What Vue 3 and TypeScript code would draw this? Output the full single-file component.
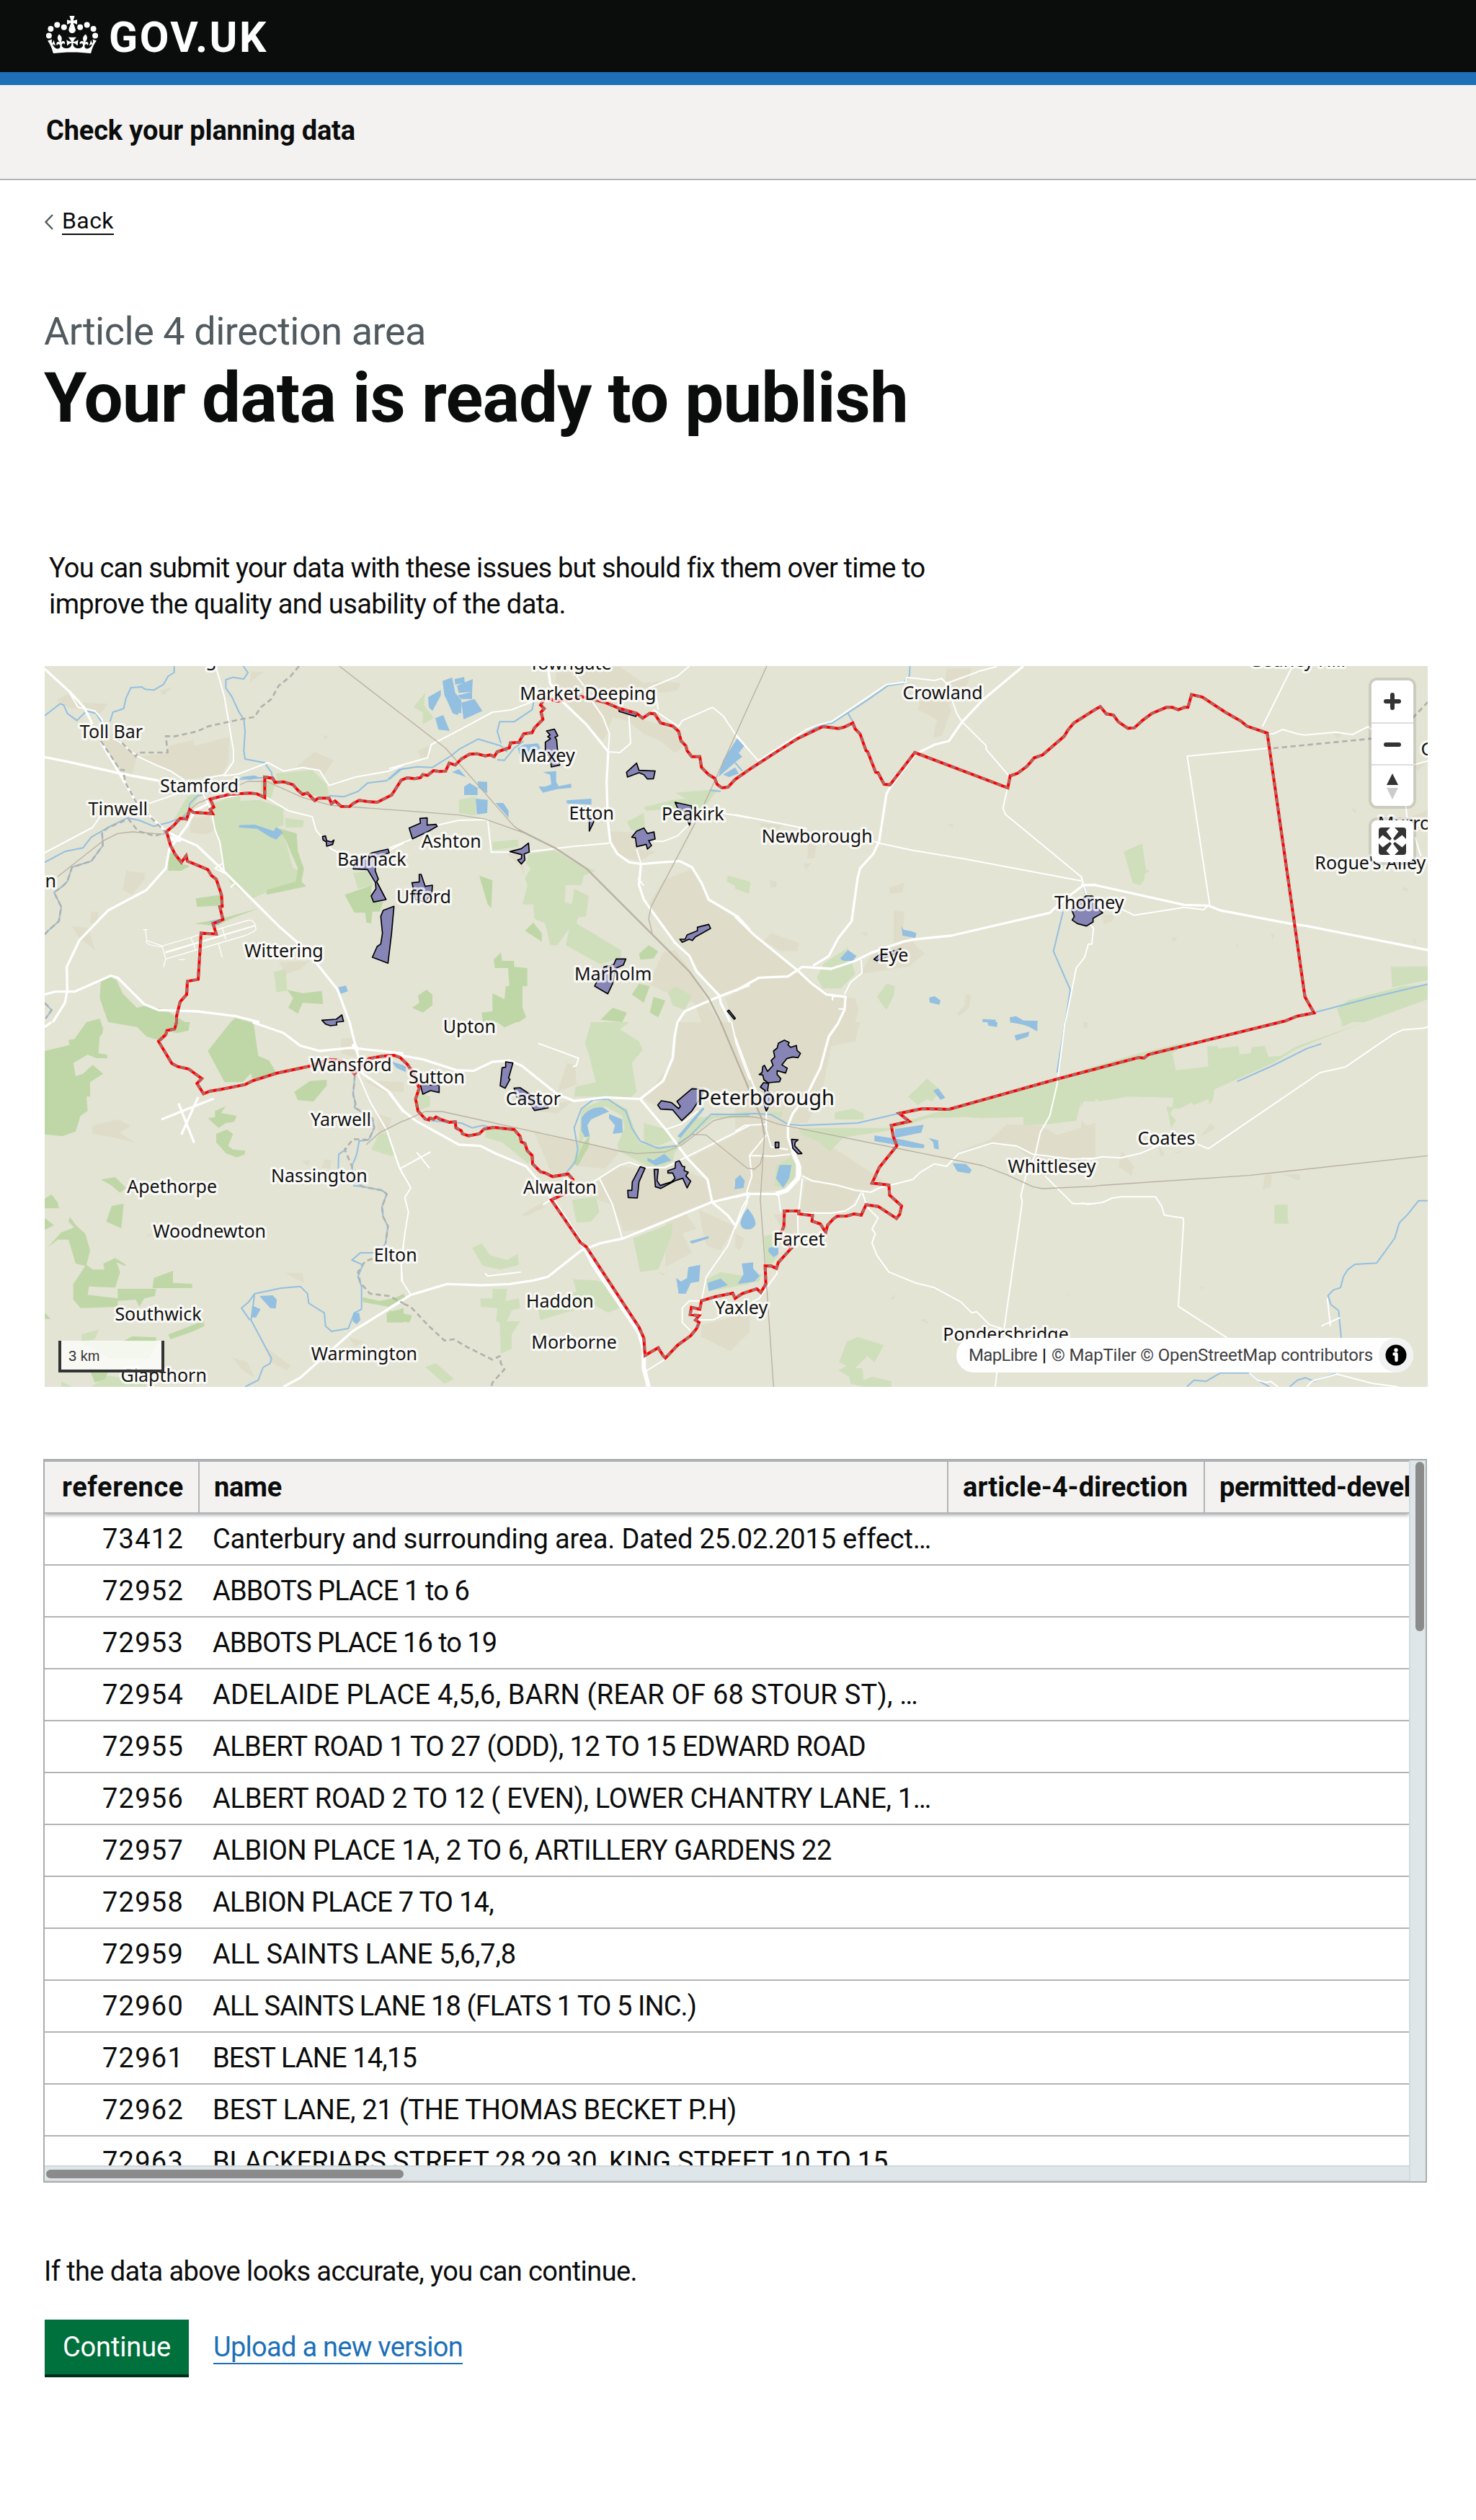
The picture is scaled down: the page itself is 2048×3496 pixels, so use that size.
<script setup lang="ts">
type Piece = [number, number, string]
interface Layer { name: string; pieces: Piece[] }
interface Place { text: string; col: number; row: number; x: number; y: number; w: number; big?: boolean }

// Spreads letters so that a run of text takes exactly the given width.
const vFit = {
  mounted(el: HTMLElement, binding: { value: number }) {
    const natural = el.getBoundingClientRect().width
    const count = (el.textContent ?? '').trim().length
    el.style.letterSpacing = `${(binding.value - natural) / count}px`
  },
}

// The map is drawn in sheets, 1440 x 1500 units apart.
const sheet = (col: number, row: number) => `translate(${col * 1440} ${row * 1500})`

const layers: Layer[] = [
  { name: 'urban', pieces: [
    [0, 0, 'M390 395L510 380 520 350 625 325 630 350 775 312 770 420 745 470 680 480 590 490 530 455 430 415ZM270 290L300 320 390 395 370 470 290 440 245 340ZM615 650L690 640 715 700 680 720 610 710ZM980 1250L1110 1245 1070 1280 1010 1300ZM345 870L425 880 420 910 370 970 330 950ZM120 1100L190 1110 215 1200 150 1150ZM1050 440L1130 375 1210 410 1170 470 1100 440ZM55 160L110 130 160 170 270 175 240 215 100 190ZM865 40L920 42 860 85ZM485 120L540 105 500 140ZM1165 305L1185 310 1175 325ZM200 1040L230 1040 225 1090 195 1090Z'],
    [1, 0, 'M700 20L960 20 1060 90 1130 80 1215 90 1200 120 1130 130 1080 110 930 180 1000 220 1120 260 1200 290 1230 350 1190 380 1130 330 1060 300 1000 250 930 230 910 290 890 330 760 200 690 90ZM920 705L1010 710 1030 780 1110 790 1040 830 960 810 930 760ZM1140 910L1260 862 1330 990 1500 1110 1500 1340 1370 1390 1250 1240 1110 1060 1080 1010ZM1140 1210L1190 1200 1250 1280 1370 1500 1300 1500 1270 1420 1140 1370 1080 1340ZM1400 1400L1500 1350 1500 1500 1430 1500ZM490 800L555 800 560 890 545 850ZM120 370L165 350 170 400 130 400Z'],
    [2, 0, 'M0 1060L100 1150 260 1280 400 1390 500 1400 515 1450 500 1500 0 1500ZM880 30L985 25 970 90 890 180 900 200 860 310 825 315 840 240 760 200 770 165 870 120ZM660 1035L705 1040 700 1110 760 1190 790 1215 720 1270 520 1300 560 1230 660 1170ZM305 745L340 740 330 820 300 820ZM640 940L705 920 695 960 645 965ZM150 1130L265 1170 260 1205 190 1205 120 1160ZM100 670L200 680 170 705 110 690ZM145 910L175 915 170 938 148 938ZM285 840L318 838 295 866ZM880 678L908 676 905 690ZM525 1128L555 1126 545 1142ZM960 1385L980 1385 975 1440 935 1475 925 1465 955 1430Z'],
    [3, 0, 'M90 1055L140 1050 130 1080 95 1095ZM1050 300L1085 300 1070 318ZM1125 610L1148 618 1140 630ZM1340 937L1360 945 1358 955 1338 950ZM380 1148L400 1148 395 1163 378 1160ZM640 1175L656 1180 652 1192ZM790 1133L805 1133 798 1158ZM1380 1152L1394 1155 1390 1178ZM1360 650L1443 618 1443 680 1370 680ZM750 300L780 310 790 350 770 330ZM1385 420L1443 412 1400 455Z'],
    [0, 1, 'M205 430L310 405 365 430 320 460 380 500 290 480 205 465ZM1240 70L1290 65 1310 150 1240 130ZM1330 240L1500 250 1500 290 1420 290ZM1390 380L1450 400 1430 470 1390 450ZM1005 1045L1080 1045 1085 1085ZM935 1360L1030 1430 1015 1450 940 1410ZM785 1395L850 1415 880 1480 830 1450ZM1075 580L1110 572 1105 600ZM1170 570L1200 575 1195 610 1160 605ZM430 885L460 880 435 895ZM1270 1310L1330 1330 1300 1350Z'],
    [1, 1, 'M1200 0L1500 0 1500 300 1310 280 1150 370 1060 320 1190 150ZM740 170L775 180 780 260 700 290ZM1240 570L1500 440 1500 700 1345 745 1320 650ZM880 650L960 600 1060 610 1180 600 1325 655 1340 750 1080 860 975 870 930 760ZM600 450L780 500 960 540 900 610 790 600 770 570 730 640 680 640ZM1150 800L1230 790 1280 860 1220 880 1260 960 1150 1020ZM1290 780L1440 850 1380 950 1320 930 1300 850ZM1300 1260L1500 1210 1500 1290 1420 1370 1300 1310ZM790 690L880 660 930 760 870 740ZM550 800L640 750 650 770 570 808ZM650 340L760 330 700 380 600 370ZM1120 1040L1150 1045 1140 1056Z'],
    [2, 1, 'M0 0L520 0 500 80 400 100 360 300 300 420 0 420ZM130 380L420 530 620 660 560 700 480 690 300 650 270 620 200 700 0 710 0 400ZM290 660L530 700 460 790 270 790ZM920 540L1060 490 1130 425 1270 430 1340 470 1500 420 1500 560 1360 620 1290 650 1240 580 1160 510 1060 510ZM160 800L260 800 260 900 200 870ZM0 1230L60 1240 0 1310ZM0 880L40 900 20 950 0 940ZM770 1240L790 1235 810 1260ZM640 1150L670 1135 660 1155ZM1370 1140L1395 1125 1390 1135Z'],
    [3, 1, 'M0 410L35 440 0 475ZM170 535L220 600 210 640 155 600ZM320 510L350 550 330 560ZM765 635L795 635 790 685 755 700ZM500 470L540 420 560 440 510 470ZM835 633L912 633 910 660 895 655ZM385 545L430 530 405 545ZM490 1100L512 1105 505 1112ZM10 0L28 0 25 25 12 22Z'],
  ] },
  { name: 'grass', pieces: [
    [0, 0, 'M820 580L900 575 1000 610 1000 680 970 690 1010 750 1040 860 1075 870 1050 915 930 960 865 988 780 920 755 880 735 740 705 680 710 590 760 570 820 555ZM905 490L970 500 945 575 905 560ZM970 465L1120 450 1180 510 1190 560 1090 555 1050 510 970 490ZM1005 650L1085 660 1080 690 1010 690ZM600 560L660 540 600 640 560 670 545 655ZM1290 880L1350 870 1375 930 1310 945ZM960 1290L1010 1280 1015 1370 970 1375Z'],
    [1, 0, 'M150 130L145 180 185 235 140 260 140 210 100 190ZM290 575L360 560 360 640 290 630ZM430 750L535 740 540 770 430 785ZM580 800L690 785 800 850 860 870 810 890 800 930 735 930 730 1000 760 1010 770 945 830 975 820 1060 785 1065 780 1090 965 1200 965 1230 880 1260 735 1180 750 1110 700 1180 670 1180 650 1090 605 1070 600 1010 555 1010 575 930 565 900 590 860 570 840ZM990 665L1060 630 1065 690 1030 705 1005 700ZM1190 545L1370 530 1300 620 1240 610 1070 620 1060 605 1180 575 1235 570ZM1410 890L1500 915 1500 960 1405 915ZM1160 1375L1190 1350 1260 1390 1230 1450 1180 1430Z'],
    [2, 0, 'M0 905L65 920 55 965 0 945ZM340 1315L370 1255 470 1190 500 1300 440 1360 365 1360ZM630 1340L665 1350 660 1390 630 1450 590 1395Z'],
    [3, 0, 'M178 790L255 757 270 865 285 870 265 885 263 910 245 930 215 920ZM1290 1270L1443 1268 1443 1325 1295 1355ZM1110 1410L1340 1350 1443 1345 1443 1405 1180 1500 1085 1500 1065 1445Z'],
    [0, 1, 'M160 1300L230 1280 215 1320 160 1330ZM1400 460L1440 470 1465 555 1420 550 1365 530ZM75 1495L120 1518 75 1518ZM270 1470L430 1500 430 1518 200 1518ZM150 1330L480 1330 440 1400 280 1400Z'],
    [1, 1, 'M840 0L1000 0 960 30 1040 80 1055 115 1010 170 1030 290 1000 320 900 310 770 310 775 270 860 250 830 130 815 90ZM800 360L900 320 990 360 1040 500 1100 520 1190 510 1270 400 1500 370 1500 400 1350 400 1250 480 1190 540 1180 580 1140 600 1080 600 960 540 950 510 980 440 970 390 900 350 830 370 810 480 770 600 750 620 790 500ZM1060 420L1150 445 1180 490 1120 515 1060 500ZM120 290L170 310 170 350 120 370ZM400 440L520 450 550 500 590 560 580 590 530 550 470 500 400 480ZM760 740L860 725 875 790 840 830 780 835ZM1015 900L1180 835 1175 890 1120 1030 1045 1040ZM345 940L385 920 420 970 490 990 535 965 540 1010 465 1030 390 1015ZM765 1070L860 1075 910 1090 960 1190 910 1210 850 1175 630 1240 620 1200 780 1120ZM380 1150L430 1150 430 1110 490 1110 485 1160 540 1150 545 1190 510 1200 490 1245 545 1245 510 1300 510 1360 465 1380 460 1250 445 1245 450 1190 380 1185ZM150 1435L195 1420 270 1485 230 1505ZM0 500L20 550 0 560ZM1320 1070L1380 1040 1500 1060 1500 1090 1330 1120Z'],
    [2, 1, 'M260 440L640 440 660 430 720 410 890 360 1330 235 1500 195 1500 330 1440 330 1420 410 1300 425 1200 430 1200 395 1030 400 960 395 800 400 650 450 450 480 395 540 350 500 280 470ZM720 310L800 235 855 285 820 330 800 320 760 345ZM120 370L200 375 190 400ZM415 375L490 360 535 380 535 405 415 405ZM170 600L230 560 260 600 240 660 200 690 165 680ZM120 890L180 880 180 970 150 1010 130 1010ZM0 1060L80 1050 110 1050 100 1080 0 1090ZM465 1330L510 1310 620 1345 580 1415 550 1390 500 1440 530 1440 535 1490 570 1475 650 1495 650 1518 540 1518 480 1505 475 1475 430 1450 465 1430 433 1415Z'],
    [3, 1, 'M0 200L240 130 450 80 380 130 395 200 530 185 525 100 570 100 570 110 655 100 660 135 705 130 710 105 765 98 780 145 830 140 900 100 1180 0 900 110 800 170 555 280 550 320 535 345 530 320 470 345 460 335 410 360 385 360 370 380 395 410 375 440 365 390 355 350 380 355 385 315 200 310 75 330 50 310 15 315 0 360ZM805 760L860 760 860 820 865 840 805 838ZM1085 0L1130 0 1085 20Z'],
  ] },
  { name: 'wood', pieces: [
    [0, 0, 'M970 690L1055 715 1060 790 1085 860 1075 915 1095 935 930 970 930 950 1050 915 1060 860 1010 745ZM520 790L545 800 570 840 610 850 575 870 520 870ZM635 985L740 970 745 1015 640 1020ZM630 1090L740 1070 900 1025 780 1070 720 1100ZM1255 970L1370 930 1365 960 1380 1000 1415 1000 1400 1040 1370 1040 1365 1090 1345 1085 1340 1045 1295 1045ZM1015 1365L1080 1380 1160 1370 1165 1425 1080 1420 1060 1465 1020 1440 1040 1400ZM240 1330L280 1310 305 1325 330 1380 390 1440 430 1430 510 1450 590 1500 270 1500 235 1400ZM180 1500L235 1485 240 1500ZM780 1500L800 1483 860 1500Z'],
    [1, 0, 'M375 890L430 910 425 1025 410 1010ZM600 1085L635 1130 635 1165 565 1120ZM465 1210L470 1245 520 1245 520 1270 575 1275 575 1350 555 1350 555 1440 570 1480 540 1500 390 1500 385 1460 430 1455 430 1380 480 1405 485 1350 500 1350 495 1275 440 1275 435 1240ZM120 1390L155 1365 180 1385 180 1430 140 1460 95 1440 125 1420ZM1040 1215L1080 1180 1120 1205 1100 1235 1045 1240ZM1040 1340L1085 1350 1060 1420 1010 1385ZM1100 1395L1150 1410 1120 1480 1085 1460ZM880 1490L930 1440 990 1460 970 1500Z'],
    [0, 1, 'M180 0L240 0 250 30 245 50 235 60 230 130 265 135 268 150 220 150 185 135 125 170 135 225 165 215 205 178 250 215 195 250 195 310 180 310 185 370 155 390 135 455 80 475 6 467 6 120 110 95 105 75 130 70ZM270 0L610 0 605 35 560 45 520 40 480 75 430 60 390 20ZM780 0L875 0 895 140 940 160 970 210 870 240 865 212 830 250 755 250 685 120ZM1045 290L1110 245 1180 240 1180 265 1125 330 1060 325ZM715 370L760 350 740 378 805 390 795 415 760 420 730 440 685 400 715 395ZM720 465L765 447 790 465 770 515 790 530 840 535 840 550 805 563 760 545 720 500ZM240 655L300 645 345 690 320 710 285 680ZM6 735L35 717 60 750 65 775 6 775ZM285 765L335 755 325 858 262 830ZM6 815L45 845 6 865ZM18 938L75 875 128 855 105 830 110 810 140 850 175 880 195 950 180 1010 205 1030 255 1030 250 1005 300 982 345 1010 340 1015 305 1000 320 1040 300 1105 190 1100 185 1135 310 1150 310 1110 470 1110 465 1140 420 1150 400 1185 385 1155 310 1160 310 1185 155 1190 125 1155 125 1090 175 1015 135 1005 105 905 60 905ZM540 1035L540 1085 620 1090 620 1107 455 1107 460 1065ZM520 1300L600 1270 670 1240 670 1265 630 1285 530 1320ZM330 1330L370 1308 470 1312 470 1330ZM6 1210L32 1235 6 1235ZM190 1440L270 1450 260 1485 215 1500ZM1330 1145L1400 1160 1500 1140 1500 1150 1440 1185 1330 1165ZM1430 1210L1500 1190 1500 1250 1430 1250Z'],
    [1, 1, 'M450 0L530 0 480 22ZM0 1160L60 1130 70 1150 0 1190ZM0 1200L95 1220 85 1250 0 1240ZM810 500L835 470 830 520 785 600 770 590Z'],
  ] },
  { name: 'water', pieces: [
    [0, 0, 'M820 480L880 473 900 482 860 492ZM815 680L880 678 960 705 970 688 998 710 970 740 945 730 890 695 815 690ZM695 1080L760 1065 730 1095 700 1090ZM1228 1355L1260 1348 1268 1372 1238 1382Z'],
    [1, 0, 'M222 80L262 65 275 130 300 160 300 215 290 212 285 222 265 215 240 160 230 140ZM272 72L312 64 315 88 275 95ZM282 100L348 72 345 125 290 130ZM285 140L345 125 345 155 300 155ZM300 170L355 155 388 205 310 240ZM162 148L215 118 215 140 180 205 165 190ZM192 235L225 222 252 288 205 283ZM262 460L290 447 320 480ZM290 555L312 555 312 520 335 505 368 525 368 555ZM368 498L408 500 408 548 372 525ZM360 570L410 575 408 630 365 635ZM443 588L475 588 497 620 497 650ZM640 460L695 455 695 500 705 518 758 508 758 525 700 530 640 545 622 520 650 520 675 510 670 470ZM738 577L842 570 842 595 740 590ZM1450 317L1478 350 1455 380 1470 395 1445 415 1370 480 1390 410ZM1390 470L1440 440 1455 465 1415 480ZM535 360L560 345 620 340 630 360 550 410Z'],
    [2, 0, 'M437 1235L470 1200 505 1225 490 1245 450 1245ZM692 1100L700 1115 735 1122 755 1130 750 1150 697 1140ZM808 1398L830 1392 855 1410 850 1428 810 1418ZM1030 1487L1085 1490 1085 1500 1030 1500ZM1143 1480L1170 1475 1200 1493 1260 1495 1260 1500 1145 1500Z'],
    [0, 1, 'M1450 165L1500 180 1500 200 1470 190ZM900 1140L955 1137 972 1155 968 1192 945 1190ZM870 1180L905 1195 885 1230 868 1228ZM1290 1210L1315 1210 1320 1240 1305 1258 1288 1245Z'],
    [1, 1, 'M800 400Q830 350 890 355L915 372 885 385 840 405 825 430 835 475 815 480 800 450ZM915 382L970 405 972 460 930 465 940 430 915 400ZM1075 565L1100 575 1145 548 1175 575 1110 597 1075 578ZM1200 475L1305 355 1312 362 1212 482ZM1435 695L1460 638 1480 660 1465 690ZM1250 912L1330 890 1330 900 1260 922ZM1195 1065L1215 1080 1240 1065 1245 1020 1295 1010 1290 1080 1255 1085 1235 1130 1205 1130ZM1325 1085L1380 1067 1410 1095 1330 1120ZM15 165L70 185 68 208 30 190Z'],
    [2, 1, 'M1050 0L1092 0 1090 20 1055 15ZM1140 0L1258 0 1258 38 1225 20 1195 10ZM1163 55L1225 40 1220 60 1170 77ZM825 285L845 275 875 315 855 323ZM665 445L785 427 775 460 665 482ZM580 472L700 490 788 510 785 525 735 522 580 495ZM805 482L845 492 848 530 828 525 825 500ZM905 587L960 590 985 615 975 630 925 622ZM185 595L235 595 225 650 200 690 170 650ZM52 775Q90 820 84 845 70 865 52 862 25 865 22 835 30 800 52 775ZM140 940L180 930 180 965 160 978 138 955ZM28 1005L75 1000 75 1025 102 1055 80 1080 10 1090 35 1050ZM0 655L20 635 40 660 35 690 0 695Z'],
  ] },
  { name: 'river', pieces: [
    [0, 0, 'M545 18L545 45 520 60 500 95 460 118 425 115 410 105 365 108 345 150 335 195 290 210 278 250M6 225L70 175 85 180 100 215 140 245 180 205 220 215 245 255M832 18L852 45 835 72 790 65 760 75 760 110 785 145 815 210 835 240 840 290 835 370 840 405 920 420 950 460 955 490M920 482L820 488 790 515 640 560 610 590 600 640 520 670 460 685 400 660 350 650 270 690 200 730 165 775 90 790 6 835M1190 557L1250 562 1310 540 1350 505 1430 495 1480 450 1500 445M245 710L248 765 200 830 120 855 100 915 80 935 45 960 75 1020 65 1080 20 1120 6 1135M6 1420L35 1450 10 1485'],
    [1, 0, 'M0 490L50 448 115 437 180 440 260 390 290 365 370 322 465 350 490 375M465 340L450 290 460 250 520 250 595 200 602 165M560 330L520 360 480 410 450 408M1335 535L1380 540M1440 420L1470 455'],
    [2, 0, 'M728 18L725 60 700 90 635 100 550 160 405 255 350 265 170 375M470 215L490 250M1445 920L1460 970M1365 1040L1325 1205 1395 1365 1375 1500'],
    [3, 0, 'M970 1460L1200 1400 1443 1342'],
    [0, 1, 'M1297 220L1290 300 1300 340 1295 355 1370 400 1378 440 1355 490 1315 495 1305 550 1285 600 1290 660 1330 685 1410 700 1430 715 1410 770 1415 810 1435 850 1425 920 1400 960 1320 960 1285 990 1330 1010 1310 1060 1325 1100 1325 1195 1295 1210 1270 1275 1200 1287 1175 1265 1170 1210 1105 1170 1100 1130 1070 1100 990 1107 880 1130 865 1240 950 1400 945 1420 915 1437 895 1490 840 1518M880 1130L855 1165 825 1190 860 1240M1228 610L1230 550 1265 525M1290 680L1330 685'],
    [1, 1, 'M175 410L300 420 345 440 390 430 430 440M735 630L775 580 785 530 770 440 800 360 850 323 910 320 985 370 1010 440 1045 495 1120 525 1190 515 1250 475 1340 383 1500 385'],
    [2, 1, 'M0 385L80 380 150 385 220 425 280 430 510 420 680 380M1373 0L1340 210'],
    [3, 1, 'M650 247L800 180 940 110 1000 90M1443 743L1405 743 1360 800 1325 835 1305 900 1230 1003 1140 1008 1110 1030 1092 1060 1080 1105 1050 1115 1028 1138 1040 1175 1072 1200 1083 1315M440 1518L470 1490 520 1495 580 1460 700 1460 735 1490 785 1518M868 1518L900 1490 935 1480 970 1495 1060 1462'],
  ] },
  { name: 'minor', pieces: [
    [0, 0, 'M110 130L145 190 215 205 245 240 250 270M718 18L755 150 770 240 792 370 792 415 755 470 700 480M300 320L395 395 470 430 530 455 590 495M750 475L810 468 870 445 935 420 1000 455 1080 440 1150 452 1190 515 1300 480 1440 455 1500 430M6 795L205 690 240 640M440 590L600 535M660 540L700 620 715 700 735 750 755 880 715 860 745 840M700 575L870 545 930 565 1020 620 1120 645 1135 700 1200 780 1240 800M1430 790L1500 755M780 940L800 920'],
    [1, 0, 'M0 445L160 400 175 345 300 280 430 210 510 200 600 165M780 60L810 100M845 165L890 230 917 300 912 375 960 378 1005 340 998 225M1080 110L1200 60 1250 18M1100 200L1205 270 1220 245 1345 190 1390 225 1440 300 1500 370M1110 140L1120 200M0 775L90 740 100 735M200 680L290 660 410 657 425 793 500 793M590 790L750 770 915 755M1100 748L1140 748 1200 725 1245 680M1390 630L1500 650M1030 780L1048 840M1035 900L1060 932'],
    [2, 0, 'M97 412L0 305M97 412L300 280 350 262 400 250 630 95 710 85 715 65 830 78 860 70 880 90 990 50 1020 38 1090 20M880 90L910 180 925 220 945 250 1045 350 1045 365 1140 475 1135 520 1115 610 1125 635 1210 705 1440 895 1450 930 1462 970M0 637L300 695M570 745L600 755 740 785 950 820 1440 912M1475 1090L1492 1110 1485 1175 1470 1175 1455 1230 1420 1275 1375 1500M525 1240L528 1295 480 1335 455 1385M405 1410L405 1395 440 1390M430 1445L455 1445'],
    [3, 0, 'M880 18L755 270M775 300L800 300 840 282 900 300 930 305 1060 293 1130 303 1195 270 1230 300M780 360L442 393 535 1010 510 1032 430 1022 220 1055 170 1030M1352 600L1357 650M1390 730L1415 810M1380 430L1443 413M0 890L10 928'],
    [0, 1, 'M1310 215L1360 330 1430 450 1480 600 1500 640M1500 930L1490 1000 1492 1080'],
    [1, 1, 'M1155 445L1215 425 1285 370M850 665L960 595 1000 583 1060 605 1150 605 1240 560 1400 480 1500 430M875 650L930 760 970 900M0 480L45 610 90 690 65 730 80 790 65 880 50 1000 55 1080 90 1135M45 610L172 540M115 542L168 608M620 88L788 150 780 180 765 186M400 1045L410 1057 548 1040M1500 720L1470 770 1440 850 1410 930 1320 1060 1300 1160 1290 1240 1350 1238 1400 1215M1300 1160L1250 1160 1220 1190 1220 1250 1255 1285M1065 1455L1145 1405M1425 0L1445 90 1500 240M640 760L680 735'],
    [2, 1, 'M0 60L30 140 75 260 130 370 130 450 150 520 220 530M0 455L40 430 130 425M60 555L130 470M60 555L160 558 230 550M60 555L70 640 50 700 50 750 0 860M280 640L320 660 420 677 500 700 565 708 600 690 740 655 770 625 830 590 880 600 930 548 1070 503 1170 515 1240 550 1300 557 1400 570 1500 567M525 710L500 760 460 785 400 795 270 795M530 710L550 770 595 815 570 860 583 880 570 920 590 970 640 1040 750 1085 830 1105 940 1165 985 1210 1005 1205 1060 1260 1110 1275M1373 0L1340 260 1310 390 1270 460 1250 550 1210 640 1190 720 1195 750 1120 1275M1290 640L1350 700 1405 755 1500 755M265 780L280 650M260 800L262 880M175 1020L175 1045 100 1150 70 1165M180 715L190 790M1090 1455L1083 1518'],
    [3, 1, 'M0 567L40 570 90 560 165 565 250 545 330 510M485 508L530 527 995 210 1100 187 1300 50 1340 32 1430 25 1443 18M0 753L30 758 90 750 130 732 170 727 310 727 335 765 347 803 425 815 427 830 405 1183 610 1315M1025 1148L1038 1265M1000 1265L1078 1230M700 1460L735 1490 770 1500 790 1495 820 1518M940 1518L960 1495 1065 1465 1210 1503 1320 1518'],
  ] },
  { name: 'major', pieces: [
    [0, 0, 'M6 30L110 125 170 190 205 260M240 335L320 470 390 590 510 705 570 735 640 765 740 860 900 1020 980 1100 1060 1170 1130 1245 1225 1365 1275 1500M6 397L120 420 320 465 480 495M6 1385L50 1373 130 1373 280 1307 310 1315 420 1425 480 1450 640 1455 800 1475 900 1500M40 1500L90 1420 100 1370 98 1270 150 1160 270 1035 430 950 510 860 525 780 560 735 600 680 630 620 690 590'],
    [1, 0, 'M660 18L670 90 720 165 820 260 912 375 905 500 910 660 920 750 950 800 1000 835 1050 842 1130 835 1210 830 1260 855 1300 920 1330 990 1450 1060 1500 1115M1048 842L1040 930 1060 990 1110 1060 1190 1170 1250 1225 1280 1290 1375 1390 1380 1420 1420 1500M1200 1500L1230 1455 1375 1393 1500 1345'],
    [2, 0, 'M1200 18L1030 160 945 250 890 330 830 345 750 385 650 515 630 550 600 745 575 800 520 860 510 900 485 1080 430 1150 390 1225 325 1265M0 1060L80 1138 260 1285 320 1340 380 1385 460 1395 455 1450 430 1500M0 1370L100 1315 220 1310 280 1270 400 1278 500 1245 570 1210 700 1165 750 1155 900 1140 1310 1045 1370 990 1450 930 1500 928'],
    [3, 0, 'M0 928L60 930 430 1012 530 1015 580 1035 870 1090 940 1100 1443 1200'],
    [0, 1, 'M6 20L35 0M870 0L1000 45 1070 98 1150 120 1280 107 1500 130M1275 0L1300 100 1330 215 1440 290 1500 375M1000 1518L1070 1480 1290 1285 1500 1155M492 405L710 318M645 312L575 468M563 338L628 502'],
    [1, 1, 'M0 130L140 155 280 200 350 203 430 165 500 160 550 180 700 300 770 328 900 313 1045 320 1140 245 1180 150 1188 60 1200 0M1045 320L1150 445 1240 565 1325 655 1345 750 1410 805 1440 845M0 295L60 370 110 410 290 510 380 515 440 545 570 600 620 660 680 740 820 950 850 1010 1040 1290 1060 1360 1060 1440 1080 1518M0 1190L90 1135 240 1090 390 1095 500 1090 600 1075 660 1060 800 950 880 920 975 900 1170 820 1340 750 1500 712'],
    [2, 1, 'M432 0L390 60 355 190 300 300 240 380 220 430 220 480 240 540 270 600 270 640 230 690 180 715 50 715 0 728'],
  ] },
  { name: 'trunk', pieces: [
    [1, 1, 'M680 740L820 950 850 1010 1040 1290 1060 1360 1060 1440 1080 1518'],
    [2, 1, 'M240 540L262 590 262 650 215 700 170 715'],
    [0, 0, 'M525 735L575 742M1290 1590L1310 1620'],
  ] },
  { name: 'runway', pieces: [
    [0, 0, 'M495 1183L850 1077Q880 1070 885 1110 890 1120 840 1140L510 1237 495 1183 430 1160M510 1237L500 1272M730 1175L745 1230M415 1115L435 1115M425 1115L430 1155M430 1160Q420 1180 495 1187M565 1240L590 1240M615 1150L635 1200M745 1110L760 1155M508 1212L880 1100M508 1208L880 1098'],
  ] },
  { name: 'rail', pieces: [
    [0, 0, 'M1232 18L1500 225M60 895L250 745 310 715 370 708 500 718 520 700 640 590 700 565M790 525L850 498 930 498 1080 565 1200 598 1500 620'],
    [1, 0, 'M60 225L235 360 520 685 560 712M60 620L290 638 400 655 560 712M1500 175L1290 640 1090 1020 1080 1070 1095 1130'],
    [2, 0, 'M60 175L132 18'],
    [0, 1, 'M1345 510L1400 460 1500 410'],
    [1, 1, 'M60 412L150 372 220 372 780 495 960 537 1030 547 1150 540 1220 510 1350 410 1420 393 1500 393M1190 520L1260 467 1320 470 1490 608'],
    [2, 1, 'M122 470L105 740 130 1080 160 1518M60 393L110 400 180 425 1030 597 1130 635 1240 685 1280 693 1500 683M50 608L80 612 105 590 118 540'],
    [3, 1, 'M60 681L700 638 1443 556'],
  ] },
  { name: 'mainline', pieces: [
    [1, 0, 'M540 700L690 775 820 860 1090 1130 1250 1290 1330 1400 1380 1500 1500 1785 1550 1900 1562 1970'],
  ] },
  { name: 'border', pieces: [
    [0, 0, 'M1065 18L1030 60 980 100 950 155 905 190 880 230 820 240 690 268 640 290 550 310 510 310 518 378 395 378 385 395 290 300M240 330L320 450 335 450 340 500 390 590 510 710 465 725 395 705 355 655 270 690 245 710 248 765 200 830 120 855 100 915 80 935 45 960 75 1020 65 1080 20 1120 6 1135M6 1420L35 1450 10 1485'],
    [3, 0, 'M800 360L1210 320M1380 235L1443 168'],
    [0, 1, 'M1297 220L1290 300 1300 340 1295 355 1370 400 1378 440 1355 490 1290 487 1255 530 1285 600 1290 660 1330 685 1410 700 1430 715 1410 770 1415 810 1435 850 1425 920M1370 985L1340 995 1310 1040 1320 1085 1360 1130 1440 1140 1500 1170'],
    [1, 1, 'M60 1172L90 1185 160 1260 230 1325 270 1320 320 1350 430 1405 460 1390 465 1420 480 1445 430 1500 425 1518'],
  ] },
  { name: 'area', pieces: [
    [0, 0, 'M1162 728L1175 725 1180 745 1200 750 1210 742 1205 760 1180 768 1178 750 1165 742ZM1290 862L1300 830 1370 795 1435 780 1440 795 1385 815 1382 870 1395 905 1388 915 1427 990 1375 1000 1365 975 1385 945 1383 920 1350 865ZM1460 1018L1450 1130 1435 1255 1370 1230 1390 1185 1405 1175 1412 1130 1405 1060 1415 1035ZM1160 1492L1220 1488 1243 1470 1250 1497 1220 1500 1222 1512 1195 1515 1175 1508Z'],
    [1, 0, 'M83 692L130 672 128 652 158 650 158 680 195 677 200 685 165 705 97 737ZM655 288L688 281 702 308 690 315 697 325 700 360 710 430 675 438 670 400 650 370 650 335 672 320 660 312 670 305ZM988 460L1030 422 1040 452 1107 455 1100 487 1075 488 1060 470 1040 462 992 480ZM957 195L1030 215 1027 228 957 207ZM833 640L855 650 850 670 833 705ZM1190 585L1258 600 1262 640 1250 680 1225 620 1200 608ZM1010 730L1030 705 1060 692 1075 715 1102 708 1107 738 1080 745 1092 765 1075 780 1070 760 1030 770 1025 733ZM503 790L550 778 580 755 583 792 562 800 565 825 550 842 535 825 550 820 552 803ZM95 920L125 917 125 885 133 885 150 935 180 930 178 960 150 1000 110 990ZM1210 1155L1232 1155 1240 1137 1283 1120 1283 1105 1330 1093 1338 1110 1275 1145 1262 1160 1248 1155 1220 1168ZM945 1237L985 1237 975 1262 945 1275 930 1340 910 1382 855 1350 895 1270 935 1260ZM1408 1454L1414 1450 1441 1484 1436 1488Z'],
    [2, 0, 'M578 1238L600 1220 690 1195 680 1210 590 1245ZM1460 975L1487 975 1500 990 1505 1020 1530 1045 1490 1068 1490 1083 1462 1100 1425 1090 1403 1075 1412 1060 1400 1030Z'],
    [1, 1, 'M485 165L515 170 497 233 503 238 483 275 462 265 470 190 485 187ZM520 275L545 273 660 350 662 357 605 368 590 345 530 310ZM130 262L208 262 208 293 172 285 140 300ZM1118 345L1133 327 1175 335 1205 360 1212 350 1198 330 1260 277 1310 280 1300 310 1260 370 1218 410 1180 365 1130 362ZM1045 602L1065 608 1040 665 1033 732 995 730 993 700 1010 700 1012 665ZM1103 613L1120 613 1115 660 1128 680 1175 665 1190 650 1180 628 1160 628 1160 618 1190 608 1192 583 1208 577 1220 600 1230 602 1228 618 1245 625 1235 640 1255 662 1240 690 1222 650 1190 660 1130 692 1108 685Z'],
    [2, 1, 'M180 88L205 75 225 85 220 95 232 105 255 97 258 118 272 130 262 148 240 145 215 152 195 178 217 192 210 212 175 202 175 218 190 235 185 248 140 252 135 285 150 300 165 330 140 350 130 370 115 330 125 285 105 270 118 252 140 255 120 240 115 220 100 218 112 210 115 185 122 180 135 205 158 180 150 160 165 145 160 120 175 108ZM167 500L182 500 182 523 167 523ZM235 488L262 490 250 500 248 515 262 530 278 547 262 548 240 525Z'],
  ] },
]

const boundarySegments: Piece[] = [
  [0, 0, '555 1500 555 1475 570 1415 597 1385 600 1330 645 1322 657 1130 720 1133 707 1090 748 1073 735 1020 745 1018 742 970 720 905 700 890 685 865 600 830 595 808 575 835 548 800 530 765 513 707 545 680 570 652 597 655 610 615 625 627 705 632 695 615 710 605 695 572 775 552 860 547 890 550 922 565 922 480 955 485 965 502 1000 500 1040 512 1060 535 1080 552 1100 547 1130 578 1145 568 1190 568 1200 590 1215 580 1240 602 1275 603 1290 590 1315 577 1350 582 1390 585 1420 570 1450 555'],
  [1, 0, '20 540 50 493 75 483 105 487 130 483 140 470 160 473 185 453 210 457 235 455 250 422 275 430 300 405 335 385 365 383 400 392 420 388 437 395 450 375 500 358 505 338 540 335 560 300 595 295 605 275 640 240 632 210 645 195 630 180 650 150 700 165 800 145 900 170 960 195 1030 215 1055 235 1085 215 1105 217 1130 255 1180 268 1205 290 1215 330 1235 350 1240 370 1260 395 1293 395 1300 440 1330 470 1355 485 1365 510 1385 525 1410 522 1440 490'],
  [2, 0, '60 448 165 380 260 320 365 270 385 272 430 278 455 272 490 255 500 280 520 300 545 370 552 375 585 460 595 462 620 510 645 512 748 378 1135 525 1145 475 1175 465 1215 435 1245 400 1280 388 1370 310 1385 285 1410 255'],
  [3, 0, '60 198 80 187 105 217 135 222 155 250 195 277 222 275 255 245 295 215 355 190 380 190 405 200 430 190 445 190 460 137 505 147 600 210 665 247 690 268 775 297 932 1395 970 1462 900 1475 850 1495'],
  [3, 1, '280 135 262 150 240 147 60 195'],
  [2, 1, '1340 237 890 363 780 360 683 380 725 413 650 430 658 475 673 515 600 605 570 670 640 678 643 720 693 765 685 800 672 817 595 767 545 760 525 803 495 798 465 807 425 808 410 818 385 845 377 875 355 840 320 828 322 805 265 798 265 786 205 786 203 850 190 880 210 920 235 940 180 1000 172 1025 150 1015 125 1015 128 1090 107 1125 90 1110 30 1130'],
  [1, 1, '1440 1150 1430 1128 1360 1142 1300 1160 1293 1195 1258 1187 1253 1217 1290 1222 1275 1240 1290 1250 1280 1275 1255 1305 1200 1345 1150 1398 1140 1388 1120 1355 1065 1387 1060 1315 1040 1270 820 935 797 918 675 740 740 710 765 655 745 632 680 643 650 628 630 623 597 590 595 555 575 535 565 505 550 498 545 475 520 447 435 438 395 445 375 465 330 473 305 465 300 452 278 440 275 415 250 417 210 403 195 395 185 403 168 400 165 407 150 403 120 370 110 320 125 275 100 210 75 175 45 147'],
  [0, 1, '1460 138 1410 142 1355 152 1295 215 1240 160 1190 155 1110 183 970 213 870 245 840 260 740 280 695 287 667 298 640 255 660 235 605 195 560 185 535 172 480 80 510 52 515 35 547 28 555 0'],
]
const boundary = 'M' + boundarySegments.map(([col, row, points]) =>
  points.split(' ').map((value, i) => Number(value) + (i % 2 ? row * 1500 : col * 1440)).join(' ')).join(' ')

const place = (text: string, col: number, row: number, x: number, y: number, w: number, big = false): Place =>
  ({ text, col, row, x, y, w, big })
const places: Place[] = [
  place('Toll Bar', 0, 0, 150, 317, 267), place('Stamford', 0, 0, 487, 542, 325), place('Tinwell', 0, 0, 190, 638, 243),
  place('n', 0, 0, 10, 938, 42), place('Barnack', 0, 0, 1228, 848, 279), place('Wittering', 0, 0, 842, 1230, 320),
  place('g', 0, 0, 684, 17, 30),
  place('Towngate', 1, 0, 590, 32, 328), place('Market Deeping', 1, 0, 550, 160, 555), place('Maxey', 1, 0, 547, 418, 225),
  place('Etton', 1, 0, 752, 658, 180), place('Peakirk', 1, 0, 1138, 661, 252), place('Ashton', 1, 0, 137, 774, 243),
  place('Ufford', 1, 0, 33, 1006, 222), place('Marholm', 1, 0, 775, 1325, 314), place('Upton', 1, 1, 230, 45, 208),
  place('Crowland', 2, 0, 698, 155, 332), place('Newborough', 2, 0, 112, 752, 458), place('Eye', 2, 0, 600, 1247, 120),
  place('Thorney', 2, 0, 1330, 1030, 288), place('Gedney Hill', 3, 0, 705, 22, 390), place('Guyhirn', 3, 0, 1423, 390, 265),
  place('Murrow', 3, 0, 1245, 700, 258), place("Rogue's Alley", 3, 0, 975, 863, 458),
  place('Wansford', 0, 1, 1113, 203, 337), place('Yarwell', 0, 1, 1115, 433, 248), place('Nassington', 0, 1, 950, 665, 397),
  place('Apethorpe', 0, 1, 352, 710, 368), place('Woodnewton', 0, 1, 458, 898, 468), place('Elton', 0, 1, 1380, 996, 172),
  place('Southwick', 0, 1, 300, 1241, 357), place('Warmington', 0, 1, 1117, 1408, 438), place('Glapthorn', 0, 1, 328, 1497, 347),
  place('Sutton', 1, 1, 85, 254, 226), place('Castor', 1, 1, 487, 345, 225), place('Alwalton', 1, 1, 560, 715, 302),
  place('Haddon', 1, 1, 573, 1189, 275), place('Morborne', 1, 1, 597, 1358, 345), place('Yaxley', 1, 1, 1355, 1215, 222),
  place('Peterborough', 1, 1, 1278, 345, 580, true), place('Farcet', 2, 1, 160, 929, 212),
  place('Whittlesey', 2, 1, 1135, 627, 367), place('Pondersbridge', 2, 1, 870, 1325, 513), place('Coates', 3, 1, 237, 510, 237),
]

const rows: { reference: string; name: string; width: number }[] = [
  { reference: '73412', name: 'Canterbury and surrounding area. Dated 25.02.2015 effect…', width: 997 },
  { reference: '72952', name: 'ABBOTS PLACE 1 to 6', width: 356 },
  { reference: '72953', name: 'ABBOTS PLACE 16 to 19', width: 394 },
  { reference: '72954', name: 'ADELAIDE PLACE 4,5,6, BARN (REAR OF 68 STOUR ST), …', width: 979 },
  { reference: '72955', name: 'ALBERT ROAD 1 TO 27 (ODD), 12 TO 15 EDWARD ROAD', width: 906 },
  { reference: '72956', name: 'ALBERT ROAD 2 TO 12 ( EVEN), LOWER CHANTRY LANE, 1…', width: 997 },
  { reference: '72957', name: 'ALBION PLACE 1A, 2 TO 6, ARTILLERY GARDENS 22', width: 859 },
  { reference: '72958', name: 'ALBION PLACE 7 TO 14,', width: 390 },
  { reference: '72959', name: 'ALL SAINTS LANE 5,6,7,8', width: 421 },
  { reference: '72960', name: 'ALL SAINTS LANE 18 (FLATS 1 TO 5 INC.)', width: 671 },
  { reference: '72961', name: 'BEST LANE 14,15', width: 283 },
  { reference: '72962', name: 'BEST LANE, 21 (THE THOMAS BECKET P.H)', width: 727 },
  { reference: '72963', name: 'BLACKFRIARS STREET 28,29,30, KING STREET 10 TO 15', width: 937 },
]
</script>

<template>
  <div class="page">
    <header class="masthead">
      <svg class="crown" viewBox="0 0 72 52" width="72" height="52" aria-hidden="true">
        <circle cx="6.4" cy="18" r="4" /><circle cx="3.9" cy="27.4" r="4" /><circle cx="15.3" cy="12.4" r="4" /><circle cx="24.8" cy="15.8" r="4" />
        <circle cx="65.6" cy="18" r="4" /><circle cx="68.1" cy="27.4" r="4" /><circle cx="56.7" cy="12.4" r="4" /><circle cx="47.2" cy="15.8" r="4" />
        <path transform="translate(2.08 0) scale(2.12 2.05)" d="M17 4.7l2.3 1.2V2.5l-2.3.7-.2-.2.9-3h-3.4l.9 3-.2.2c-.1.1-2.3-.7-2.3-.7v3.4L15 4.7c.1.1.1.2.2.2l-1.3 4c-.1.2-.1.4-.1.6 0 1.1.8 2 1.9 2.2h.7c1-.2 1.9-1.1 1.9-2.1 0-.2 0-.4-.1-.6l-1.3-4c-.1-.2 0-.2 0-.2z" />
        <path transform="translate(2.08 -8) scale(2.12 2)" d="M16 29.2c4.4 0 8.6.3 12.3.8 1.1-4.5 2.4-7 3.7-8.8l-2.5-.9c.2 1.3.3 1.9 0 2.7-.4-.4-.8-1.1-1.1-2.3l-1.2 4c.7-.5 1.3-.8 2-.9-1.1 2.5-2.6 3.1-3.5 3-1.1-.2-1.7-1.2-1.5-2.1.3-1.2 1.5-1.5 2.1-.1 1.1-2.3-.8-3-2-2.3 1.9-1.9 2.1-3.5.6-5.6-2.1 1.6-2.1 3.2-1.2 5.5-1.2-1.4-3.2-.6-2.5 1.6.9-1.4 2.1-.5 1.9.8-.2 1.1-1.7 2.1-3.5 1.9-2.7-.2-2.9-2.1-2.9-3.6.7-.1 1.9.5 2.9 1.9l.4-4.3c-1.1 1.1-2.1 1.4-3.2 1.4.4-1.2 2.1-3 2.1-3h-5.4s1.7 1.9 2.1 3c-1.1 0-2.1-.2-3.2-1.4l.4 4.3c1-1.4 2.2-2 2.9-1.9-.1 1.5-.2 3.4-2.9 3.6-1.9.2-3.4-.8-3.5-1.9-.2-1.3 1-2.2 1.9-.8.7-2.3-1.2-3-2.5-1.6.9-2.2.9-3.9-1.2-5.5-1.5 2-1.3 3.7.6 5.6-1.2-.7-3.1 0-2 2.3.6-1.4 1.8-1.1 2.1.1.2.9-.3 1.9-1.5 2.1-.9.2-2.4-.5-3.5-3 .6 0 1.2.3 2 .9l-1.2-4c-.3 1.1-.7 1.9-1.1 2.3-.3-.8-.2-1.4 0-2.7L0 21.2C1.3 23 2.6 25.5 3.7 30c3.7-.5 7.9-.8 12.3-.8" />
      </svg>
      <span v-fit="221" class="brand">GOV.UK</span>
    </header>
    <nav class="service"><span v-fit="429">Check your planning data</span></nav>

    <main class="content">
      <a class="back">
        <svg width="14" height="24" viewBox="0 0 14 24" aria-hidden="true"><path d="M12 2L2.5 12 12 22" /></svg>
        <span v-fit="72">Back</span>
      </a>
      <div class="caption"><span v-fit="530">Article 4 direction area</span></div>
      <h1><span v-fit="1199">Your data is ready to publish</span></h1>
      <p class="intro">
        <span v-fit="1214">You can submit your data with these issues but should fix them over time to</span>
        <span v-fit="717">improve the quality and usability of the data.</span>
      </p>

      <section class="map">
        <svg class="canvas" viewBox="6 18 5757 3000" width="1919" height="1000" preserveAspectRatio="none">
          <g v-for="layer in layers" :key="layer.name" :class="layer.name">
            <path v-for="(piece, i) in layer.pieces" :key="i" :d="piece[2]" :transform="sheet(piece[0], piece[1])" />
          </g>
          <path class="boundary" :d="boundary" />
          <path class="boundary dash" :d="boundary" />
          <g class="places">
            <text v-for="item in places" :key="item.text" :class="{ big: item.big }" :x="item.x + item.w / 2" :y="item.y" :transform="sheet(item.col, item.row)">{{ item.text }}</text>
          </g>
        </svg>
        <div class="controls">
          <div class="zoomers">
            <button aria-label="Zoom in"><svg width="58" height="58"><path class="bar" d="M20 29H38M29 20V38" /></svg></button>
            <button aria-label="Zoom out"><svg width="58" height="58"><path class="bar" d="M20 29H38" /></svg></button>
            <button aria-label="Reset north"><svg width="58" height="58"><path fill="#333" d="M21 27L29 11 37 27Z" /><path fill="#ccc" d="M21 31L29 47 37 31Z" /></svg></button>
          </div>
          <div class="zoomers">
            <button aria-label="Full screen">
              <svg width="58" height="58" viewBox="0 0 58 58">
                <g v-for="angle in [0, 90, 180, 270]" :key="angle" :transform="`rotate(${angle} 29 29)`">
                  <path fill="#333" d="M10 14Q10 10 14 10H26L20.5 15.5 28 25.5 25.5 28 15.5 20.5 10 26Z" />
                </g>
              </svg>
            </button>
          </div>
        </div>
        <div class="scale">3 km</div>
        <div class="credits">
          <span v-fit="95">MapLibre</span><b>|</b><span v-fit="446">© MapTiler © OpenStreetMap contributors</span>
          <svg width="48" height="48" viewBox="0 0 48 48"><circle cx="24" cy="24" r="24" fill="#f2f2f2" /><circle cx="24" cy="24" r="14.5" /><circle cx="24" cy="17" r="2.7" fill="#fff" /><path d="M21.5 22.5H24.5V31" fill="none" stroke="#fff" stroke-width="4.4" stroke-linecap="round" stroke-linejoin="round" /></svg>
        </div>
      </section>

      <section class="grid">
        <div class="viewport">
          <div class="row head">
            <div class="ref"><span v-fit="169">reference</span></div>
            <div class="name"><span v-fit="94">name</span></div>
            <div class="direction"><span v-fit="312">article-4-direction</span></div>
            <div class="rights">permitted-development-rights</div>
          </div>
          <div v-for="row in rows" :key="row.reference" class="row">
            <div class="ref"><span v-fit="113">{{ row.reference }}</span></div>
            <div class="name"><span v-fit="row.width">{{ row.name }}</span></div>
          </div>
        </div>
        <div class="track-y"><i></i></div>
        <div class="track-x"><i></i></div>
      </section>

      <p class="outro"><span v-fit="823">If the data above looks accurate, you can continue.</span></p>
      <div class="actions">
        <button class="continue"><span v-fit="150">Continue</span></button>
        <a class="upload"><span v-fit="346">Upload a new version</span></a>
      </div>
    </main>
  </div>
</template>

<style>
body { background: #fff; }
</style>

<style scoped>
.page { width: 2048px; height: 3496px; overflow: hidden; font: 38px/50px Roboto, sans-serif; color: #0b0c0c; box-sizing: border-box; }
.page *, .page *::before { box-sizing: border-box; }
.page span { display: inline-block; white-space: nowrap; }
button { border: 0; padding: 0; margin: 0; font: inherit; display: block; }
svg { display: block; flex: none; }
p, h1 { margin: 0; }

.masthead { height: 118px; background: #0b0c0c; border-bottom: 18px solid #1d70b8; display: flex; align-items: flex-start; padding: 22px 0 0 64px; gap: 15px; }
.crown { fill: #fff; }
.brand { color: #fff; font-size: 59px; font-weight: 700; line-height: 60px; }
.service { height: 132px; background: #f3f2f1; border-bottom: 2px solid #b1b4b6; padding: 38px 0 0 64px; font-weight: 700; }
.content { padding: 0 67px 0 61px; }
.back { display: flex; width: max-content; margin-top: 38px; height: 38px; font-size: 32px; line-height: 36px; gap: 11px; }
.back svg { margin-top: 8px; fill: none; stroke: #505a5f; stroke-width: 2.4; }
.back span { border-bottom: 2px solid #0b0c0c; }
.caption { margin-top: 104px; height: 60px; font-size: 54px; line-height: 60px; color: #505a5f; }
h1 { font-size: 96px; line-height: 104px; height: 104px; font-weight: 700; margin-top: 10px; }
.intro { margin: 159px 0 0 7px; display: flex; flex-direction: column; align-items: flex-start; height: 100px; }

.map { position: relative; width: 1919px; height: 1000px; margin: 61px 0 0 1px; background: #e3e4d4; overflow: hidden; }
.urban { fill: #dfddca; }
.grass { fill: #cfdfbb; }
.wood { fill: #bfd7a7; }
.water { fill: #93bfe0; }
.river, .minor, .major, .trunk, .runway, .rail, .mainline, .border { fill: none; stroke-linejoin: round; }
.river { stroke: #93bfe0; stroke-width: 6; }
.minor { stroke: #fff; stroke-width: 6; }
.major { stroke: #fff; stroke-width: 10; }
.trunk { stroke: #fff; stroke-width: 18; }
.runway { stroke: #fff; stroke-width: 4; }
.rail { stroke: #b9b0a2; stroke-width: 4; }
.mainline { stroke: #b9b0a2; stroke-width: 7; }
.border { stroke: #b1b1ad; stroke-width: 8; stroke-dasharray: 22 14; }
.area { fill: #8685b6; stroke: #000; stroke-width: 5; stroke-linejoin: round; }
.boundary { fill: none; stroke: #f00; stroke-width: 12; }
.boundary.dash { stroke: #b85f5f; stroke-dasharray: 20 14; }
.places { font: 75px "Noto Sans", sans-serif; text-anchor: middle; fill: #111; stroke: rgba(255, 255, 255, .75); stroke-width: 20; stroke-linejoin: round; paint-order: stroke; }
.places .big { font-size: 87px; }
.controls { position: absolute; top: 20px; right: 20px; display: flex; flex-direction: column; gap: 20px; }
.zoomers { width: 58px; border-radius: 8px; background: #fff; box-shadow: 0 0 0 4px rgba(0, 0, 0, .1); overflow: hidden; }
.zoomers { clip-path: none; }
.zoomers button { width: 58px; height: 58px; background: #fff; }
.zoomers button + button { border-top: 2px solid #ddd; }
.bar { stroke: #333; stroke-width: 6; stroke-linecap: round; }
.scale { position: absolute; left: 19px; top: 936px; width: 147px; height: 44px; border: 4px solid #333; border-top: 0; background: rgba(255, 255, 255, .75); padding: 0 10px; font: 20px/42px "Liberation Sans", Arial, sans-serif; color: #333; }
.credits { position: absolute; right: 20px; bottom: 20px; width: 634px; height: 48px; border-radius: 24px; background: #fff; display: flex; align-items: center; padding-left: 17px; font-size: 24px; line-height: 48px; color: #404040; }
.credits b { font-weight: 500; color: #000; width: 20px; text-align: center; }
.credits svg { margin-left: auto; }

.grid { margin: 100px 0 0 -1px; width: 1920px; height: 1004px; border: 2px solid #a9acad; display: grid; grid-template-columns: 1893px 23px; grid-template-rows: 978px 22px; position: relative; }
.viewport { overflow: hidden; }
.row { display: flex; height: 72px; border-bottom: 2px solid #b1b4b6; line-height: 70px; white-space: nowrap; }
.ref { width: 213px; padding-right: 20px; text-align: right; flex: none; }
.name { width: 1039px; padding-left: 20px; flex: none; }
.head { height: 74px; border-top: 2px solid #b1b4b6; background: #f3f2f1; font-weight: 700; line-height: 71px; position: relative; box-shadow: 0 2px 5px rgba(0, 0, 0, .35); }
.head > div + div { border-left: 2px solid #b1b4b6; }
.head .direction { width: 356px; padding-left: 20px; flex: none; }
.head .rights { padding-left: 20px; letter-spacing: -.5px; }
.track-y { background: #dfe6e9; border-left: 2px solid #d2dadc; padding: 2px 0 0 7px; grid-row: span 2; }
.track-y i { display: block; width: 12px; height: 235px; border-radius: 6px; background: #8b8b8b; }
.track-x { background: #dfe6e9; border-top: 2px solid #cfd8da; border-bottom: 2px solid #d2dadc; padding: 4px 0 0 2px; }
.track-x i { display: block; width: 496px; height: 12px; border-radius: 6px; background: #8b8b8b; }

.outro { margin-top: 98px; height: 50px; }
.actions { display: flex; margin: 42px 0 0 1px; }
.continue { width: 200px; height: 76px; background: #00703c; color: #fff; box-shadow: 0 4px 0 #002d18; line-height: 76px; text-align: center; }
.upload { margin: 17px 0 0 34px; color: #1d70b8; line-height: 43px; }
.upload span { border-bottom: 2px solid #1d70b8; }
</style>
